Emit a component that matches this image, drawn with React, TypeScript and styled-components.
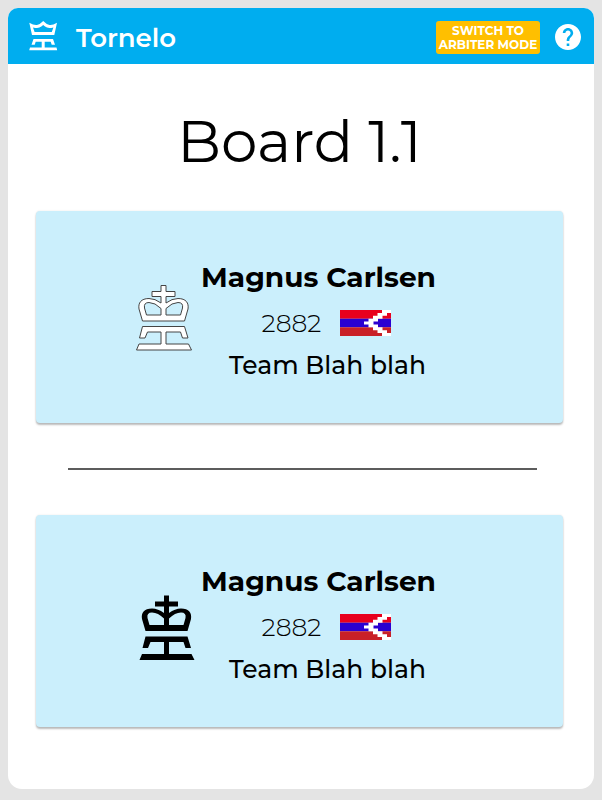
import React from "react";
import styled, { createGlobalStyle } from "styled-components";

const GlobalStyle = createGlobalStyle`
  * { box-sizing: border-box; }
  body {
    margin: 0;
    background: #e4e4e4;
    font-family: Montserrat, Inter, "Liberation Sans", sans-serif;
    color: #000;
  }
`;

const Page = styled.div`
  min-height: 100vh;
  padding: 8px 8px 11px;
  display: flex;
`;

const Screen = styled.div`
  flex: 1;
  background: #fff;
  border-radius: 10px 10px 14px 14px;
  overflow: hidden;
`;

const Toolbar = styled.header`
  display: flex;
  align-items: center;
  height: 56px;
  padding: 0 13px 0 20px;
  background: #00adef;
  color: #fff;
`;

const Brand = styled.a`
  display: flex;
  align-items: center;
  gap: 18px;
  margin-right: auto;
  color: inherit;
  text-decoration: none;
  font-size: 26px;
  line-height: 32px;
  font-weight: 600;

  span { padding-top: 4px; }
`;

const ModeButton = styled.button`
  width: 104px;
  height: 33px;
  margin: 3px 15px 0 0;
  padding: 0;
  border: 0;
  border-radius: 3px;
  background: #ffbf00;
  color: #fff;
  font: inherit;
  font-size: 12px;
  line-height: 14px;
  font-weight: 700;
  white-space: nowrap;
`;

const HelpButton = styled.button`
  display: flex;
  margin-top: 2px;
  padding: 0;
  border: 0;
  background: none;
  color: inherit;
`;

const Content = styled.main`
  display: flex;
  flex-direction: column;
  padding: 40px 31px 0 28px;
`;

const Title = styled.h1`
  margin: 0 0 31px;
  text-align: center;
  font-size: 58px;
  line-height: 76px;
  font-weight: 400;
`;

const Card = styled.article`
  display: flex;
  align-items: center;
  justify-content: center;
  gap: 8px;
  min-height: 212px;
  padding: 8px 28px 0 0;
  border-radius: 4px;
  background: #cbeffc;
  box-shadow: 0 2px 2px rgba(0, 0, 0, 0.26), 0 0 2px rgba(0, 0, 0, 0.1);
`;

const Divider = styled.hr`
  align-self: stretch;
  height: 2px;
  margin: 45px 26px 45px 32px;
  border: 0;
  background: #5c5c5c;
`;

const Info = styled.div`
  display: flex;
  flex-direction: column;
`;

const Name = styled.h2`
  margin: 0 0 4px;
  font-size: 28px;
  line-height: 40px;
  font-weight: 700;
  white-space: nowrap;
`;

const Details = styled.div`
  display: flex;
  flex-direction: column;
  align-items: center;
  padding-left: 18px;
`;

const Rating = styled.div`
  display: flex;
  align-items: center;
  gap: 19px;
  padding-right: 2px;
  font-size: 25px;
  line-height: 44px;
  font-weight: 300;
`;

const Team = styled.p`
  margin: 0;
  font-size: 25px;
  line-height: 40px;
  font-weight: 500;
  white-space: nowrap;
`;

const BrandMark = () => (
  <svg width="30" height="32" viewBox="0 0 30 32" aria-hidden="true">
    <path
      fill="#fff"
      fillRule="evenodd"
      d="M1.3 2.700Q6 5.500 9 5Q12.500 4 15.200 1Q18 4 21.500 5Q24.500 5.500 29 2.700L26.300 15H4Z M5 7.500L6.600 12H23.800L25.400 7.500Q21 8.500 19 7.600Q17 6.800 15.200 5Q13.400 6.800 11.400 7.600Q9.400 8.500 5 7.500Z"
    />
    <path
      fill="#fff"
      d="M5.500 19H25L27 24.700H23.700L22.700 21.700H16.700V27.500H28.500L29.200 30.300H1.200L2 27.500H13.700V21.700H7.700L6.700 24.700H3.500Z"
    />
  </svg>
);

const HelpIcon = () => (
  <svg width="26" height="26" viewBox="2 2 20 20" aria-hidden="true">
    <path
      fill="#fff"
      d="M12 2C6.480 2 2 6.480 2 12s4.480 10 10 10 10-4.480 10-10S17.520 2 12 2zm1 17h-2v-2h2v2zm2.070-7.750-.9.920C13.450 12.900 13 13.500 13 15h-2v-.5c0-1.100.45-2.100 1.170-2.830l1.240-1.260c.37-.36.59-.86.59-1.410 0-1.100-.9-2-2-2s-2 .9-2 2H8c0-2.210 1.790-4 4-4s4 1.790 4 4c0 .88-.36 1.680-.93 2.250z"
    />
  </svg>
);

const KingSvg = styled.svg`
  flex: none;
  overflow: visible;
`;

const King = ({ white }: { white?: boolean }) => (
  <KingSvg
    width="58"
    height="74"
    viewBox={white ? "0 0 58 74" : "-3 -6 58 74"}
    fill={white ? "#fff" : "#000"}
    stroke={white ? "#444" : "none"}
    role="img"
    aria-label={white ? "White" : "Black"}
  >
    <path
      fillRule="evenodd"
      d="M26 1.500H31V7.500H40V12.500H31V19Q37 14.500 43 14.500C51 14.500 54 19 53 25L49.500 37H7.500L4 25C3 19 6 14.500 14 14.500Q20 14.500 26 19V12.500H17V7.500H26Z M11.500 31H26V24.500Q20 18.500 14 18.500Q8.500 18.500 9.500 24Z M31 31H45.500L47.500 24Q48.500 18.500 43 18.500Q37 18.500 31 24.500Z"
    />
    <path d="M7.500 42.500H49.500L53 54H47.500L45.500 48H31V60H53.500L56.500 66H1.500L4 60H26V48H12.500L10 54H4.500Z" />
  </KingSvg>
);

const Flag = () => (
  <svg
    width="51"
    height="26"
    viewBox="0 0 51 27"
    preserveAspectRatio="none"
    role="img"
    aria-label="Artsakh"
  >
    <path fill="#e8001d" d="M0 0H51V9H0Z" />
    <path fill="#2a00d1" d="M0 9H51V18H0Z" />
    <path fill="#c92027" d="M0 18H51V27H0Z" />
    <path
      fill="#fff"
      d="M42 0H51V3H47V6H42.500V9H38V12H33.500V15H38V18H42.500V21H47V24H51V27H42V24H37.500V21H33V18H28.500V15H24V12H28.500V9H33V6H37.500V3H42Z"
    />
  </svg>
);

const PlayerCard = ({ white }: { white?: boolean }) => (
  <Card>
    <King white={white} />
    <Info>
      <Name>Magnus Carlsen</Name>
      <Details>
        <Rating>
          <span>2882</span>
          <Flag />
        </Rating>
        <Team>Team Blah blah</Team>
      </Details>
    </Info>
  </Card>
);

export default function App() {
  return (
    <>
      <GlobalStyle />
      <Page>
        <Screen>
          <Toolbar>
            <Brand href="#">
              <BrandMark />
              <span>Tornelo</span>
            </Brand>
            <ModeButton type="button">
              SWITCH TO
              <br />
              ARBITER MODE
            </ModeButton>
            <HelpButton type="button" aria-label="Help">
              <HelpIcon />
            </HelpButton>
          </Toolbar>
          <Content>
            <Title>Board 1.1</Title>
            <PlayerCard white />
            <Divider />
            <PlayerCard />
          </Content>
        </Screen>
      </Page>
    </>
  );
}
